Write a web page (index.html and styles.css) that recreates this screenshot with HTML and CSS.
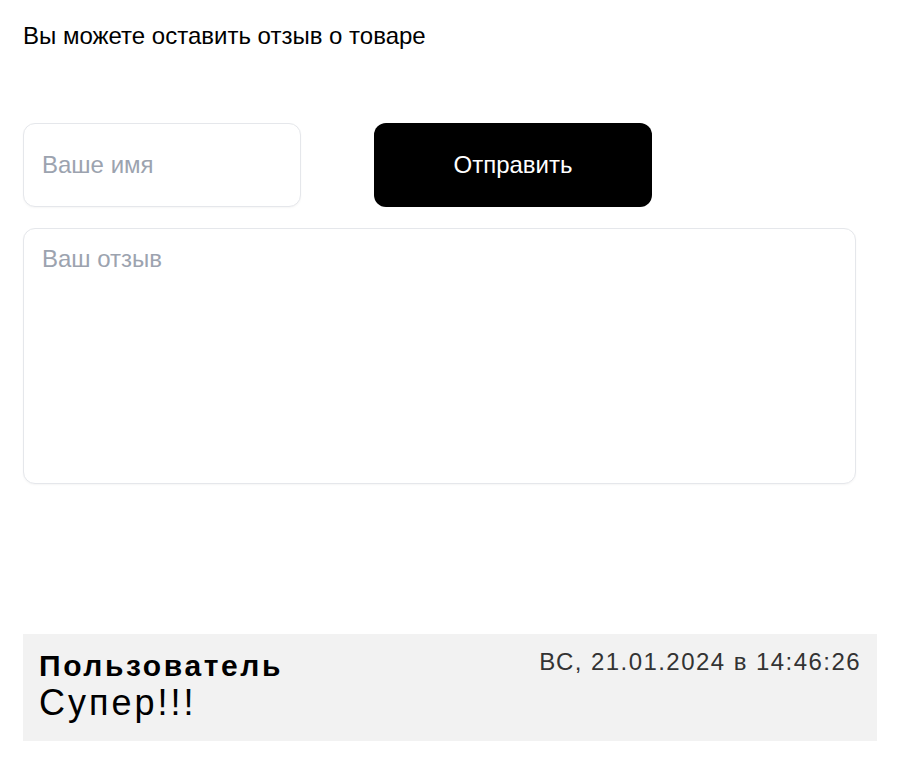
FILE: index.html
```html
<!DOCTYPE html>
<html lang="ru">
<head>
<meta charset="utf-8">
<link rel="stylesheet" href="styles.css">
</head>
<body>
<div class="page">
  <p class="title">Вы можете оставить отзыв о товаре</p>
  <form class="form">
    <div class="row">
      <input class="field name" type="text" placeholder="Ваше имя">
      <button class="send" type="button">Отправить</button>
    </div>
    <textarea class="field text" placeholder="Ваш отзыв"></textarea>
  </form>
  <div class="review">
    <div class="review-head">
      <span class="author">Пользователь</span>
      <span class="date">ВС, 21.01.2024 в 14:46:26</span>
    </div>
    <div class="review-body">Супер!!!</div>
  </div>
</div>
</body>
</html>
```

FILE: styles.css
```css
* { box-sizing: border-box; }
body {
  margin: 0;
  background: #fff;
  font-family: "Liberation Sans", Arial, sans-serif;
  color: #000;
}
.page {
  padding: 22px 27px 0 23px;
}
.title {
  margin: 0;
  font-size: 24px;
  line-height: 28px;
}
.form {
  margin-top: 73px;
  display: flex;
  flex-direction: column;
  gap: 21px;
}
.row {
  display: flex;
  gap: 73px;
}
.field {
  border: 1px solid #e5e7eb;
  border-radius: 12px;
  background: #fff;
  font-family: inherit;
  font-size: 24px;
  color: #000;
  outline: none;
  box-shadow: 0 1px 2px rgba(0,0,0,0.04);
}
.field::placeholder { color: #9ca3af; }
.name {
  width: 278px;
  height: 84px;
  padding: 0 18px;
}
.send {
  width: 278px;
  height: 84px;
  border: none;
  border-radius: 12px;
  background: #000;
  color: #fff;
  font-family: inherit;
  font-size: 24px;
}
.text {
  width: 833px;
  height: 256px;
  padding: 16px 18px;
  line-height: normal;
  resize: none;
  display: block;
}
.review {
  margin-top: 150px;
  width: 854px;
  height: 107px;
  background: #f2f2f2;
  padding: 16px 16px 0 16px;
}
.review-head {
  display: flex;
  justify-content: space-between;
  align-items: flex-start;
}
.author {
  font-weight: bold;
  font-size: 30px;
  letter-spacing: 2.6px;
  line-height: 32px;
}
.date {
  font-size: 24px;
  letter-spacing: 1.45px;
  color: #333;
  line-height: normal;
  margin-top: -2px;
}
.review-body {
  font-size: 36px;
  letter-spacing: 3px;
  line-height: 42px;
}
```
